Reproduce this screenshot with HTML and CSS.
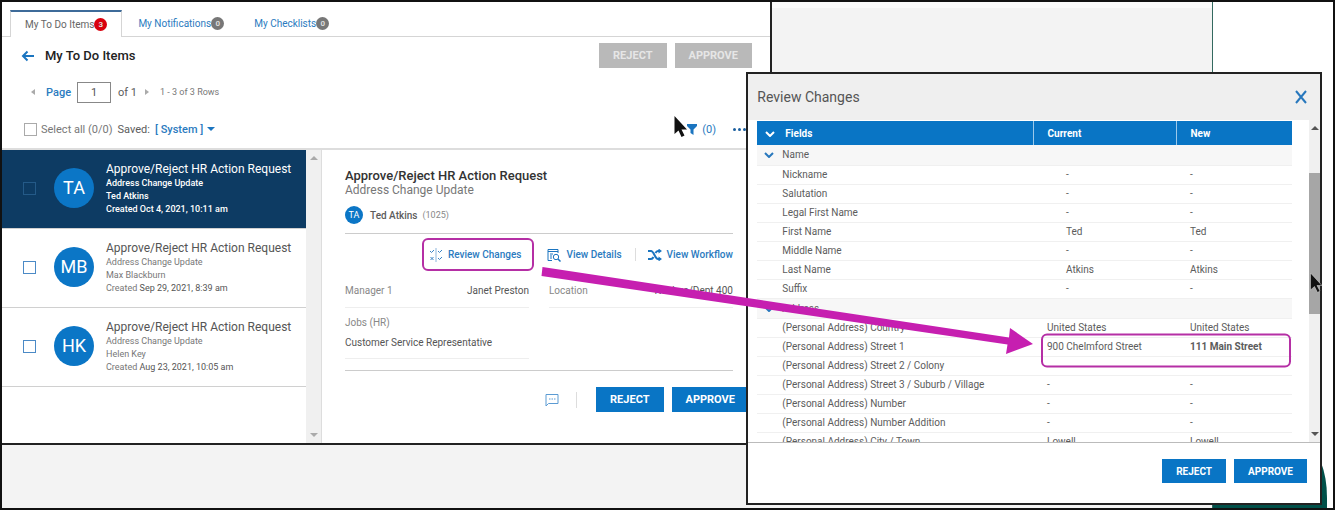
FILE: index.html
```html
<!DOCTYPE html>
<html lang="en">
<head>
  <meta charset="UTF-8">
  <meta name="viewport" content="width=device-width, initial-scale=1.0">
  <title>My To Do Items</title>
  <link rel="stylesheet" href="styles.css">
</head>
<body>
  <div class="slide">
    <div class="backdrop"></div>
    <div class="side"><div class="swoosh"></div></div>

    <!-- To do window -->
    <main class="window app">
      <nav class="tabs">
        <a href="#todo" class="tab active">My To Do Items<span class="count red">3</span></a>
        <a href="#notifications" class="tab">My Notifications<span class="count">0</span></a>
        <a href="#checklists" class="tab">My Checklists<span class="count">0</span></a>
      </nav>

      <header class="title-bar">
        <a href="#back" class="back" aria-label="Back">
          <svg width="14" height="12" viewBox="0 0 14 12"><path d="M13 6H2M6.500 1.500L2 6l4.500 4.500" fill="none" stroke="#1b75c0" stroke-width="2"/></svg>
        </a>
        <h1>My To Do Items</h1>
        <button class="btn disabled" disabled>REJECT</button>
        <button class="btn disabled" disabled>APPROVE</button>
      </header>

      <div class="pager">
        <span class="arrow left"></span>
        <label for="page">Page</label>
        <input type="text" id="page" value="1">
        <span class="total">of 1</span>
        <span class="arrow right"></span>
        <span class="rows">1 - 3 of 3 Rows</span>
      </div>

      <div class="toolbar">
        <input type="checkbox" id="all" class="check grey">
        <label for="all">Select all (0/0)</label>
        <span class="saved">Saved:</span>
        <button class="link saved-view">[ System ] <span class="caret"></span></button>
        <button class="link filter">
          <svg width="10" height="11" viewBox="0 0 10 11"><path d="M0 0h10v2L6.500 5.500V11L3.500 9V5.500L0 2z" fill="#1b75c0"/></svg>
          (0)
        </button>
        <button class="link more" aria-label="More"><i></i><i></i><i></i></button>
      </div>

      <div class="content">
        <div class="list">
          <article class="item selected">
            <input type="checkbox" class="check" aria-label="Select Ted Atkins">
            <div class="avatar">TA</div>
            <div class="text">
              <h2>Approve/Reject HR Action Request</h2>
              <p>Address Change Update</p>
              <p>Ted Atkins</p>
              <p>Created Oct 4, 2021, 10:11 am</p>
            </div>
          </article>
          <article class="item">
            <input type="checkbox" class="check" aria-label="Select Max Blackburn">
            <div class="avatar">MB</div>
            <div class="text">
              <h2>Approve/Reject HR Action Request</h2>
              <p>Address Change Update</p>
              <p>Max Blackburn</p>
              <p>Created <span>Sep 29, 2021, 8:39 am</span></p>
            </div>
          </article>
          <article class="item">
            <input type="checkbox" class="check" aria-label="Select Helen Key">
            <div class="avatar">HK</div>
            <div class="text">
              <h2>Approve/Reject HR Action Request</h2>
              <p>Address Change Update</p>
              <p>Helen Key</p>
              <p>Created <span>Aug 23, 2021, 10:05 am</span></p>
            </div>
          </article>
        </div>
        <div class="scrollbar"><span class="up"></span><span class="down"></span></div>

        <section class="detail">
          <h2>Approve/Reject HR Action Request</h2>
          <p class="sub">Address Change Update</p>
          <div class="person">
            <div class="avatar small">TA</div>
            <span>Ted Atkins</span>
            <small>(1025)</small>
          </div>
          <div class="links">
            <a href="#review" class="marked">
              <svg width="14" height="14" viewBox="0 0 14 14" fill="none" stroke="#3b83c4"><path d="M7 0v14" stroke="#8db6dc"/><path d="M1 3l1.500 1.500L5 2M9 3l1.500 1.500L13 2M9 10l1.500 1.500L13 9M1.500 9l3 3M4.500 9l-3 3"/></svg>
              Review Changes
            </a>
            <a href="#details">
              <svg width="14" height="14" viewBox="0 0 14 14" fill="none" stroke="#1b75c0"><path d="M5 12.500H1v-11h10V5M1 3.500h10M3 6h3M3 8h2M3 10h2"/><circle cx="9" cy="9" r="2.700"/><path d="M11 11l2.500 2.500" stroke-width="1.500"/></svg>
              View Details
            </a>
            <a href="#workflow" class="divided">
              <svg width="14" height="12" viewBox="0 0 14 12"><path d="M0 2h3c3 0 4 8 7 8h1M0 10h3c1 0 2-1 2.500-2M7.500 4C8 3 9 2 10 2h1" fill="none" stroke="#1b75c0" stroke-width="2"/><path d="M10.500-.5L14 2l-3.500 2.500zM10.500 7.500L14 10l-3.500 2.500z" fill="#1b75c0"/></svg>
              View Workflow
            </a>
          </div>
          <div class="facts">
            <div class="fact"><span>Manager 1</span><b>Janet Preston</b></div>
            <div class="fact"><span>Location</span><b>Nashua/Dept 400</b></div>
            <div class="fact stacked"><span>Jobs (HR)</span><b>Customer Service Representative</b></div>
          </div>
          <footer class="detail-actions">
            <button class="link comment" aria-label="Comments">
              <svg width="14" height="14" viewBox="0 0 14 14" fill="none" stroke="#5b9bd3"><path d="M1 13V1.500h12v9H3.500z"/><path d="M4 6h1.500M6.500 6H8M9 6h1.500"/></svg>
            </button>
            <button class="btn">REJECT</button>
            <button class="btn">APPROVE</button>
          </footer>
        </section>
      </div>
    </main>

    <!-- Review Changes dialog -->
    <section class="window dialog">
      <header class="dialog-head">
        <h2>Review Changes</h2>
        <button class="link" aria-label="Close">
          <svg width="12" height="14" viewBox="0 0 12 14"><path d="M1 1l10 12M11 1L1 13" fill="none" stroke="#2878bd" stroke-width="2"/></svg>
        </button>
      </header>
      <div class="dialog-body">
        <div class="table-wrap">
          <table>
            <thead>
              <tr>
                <th><svg width="10" height="6" viewBox="0 0 10 6"><path d="M1 1l4 4 4-4" fill="none" stroke="#fff" stroke-width="2"/></svg>Fields</th>
                <th>Current</th>
                <th>New</th>
              </tr>
            </thead>
            <tbody class="names">
              <tr class="group"><td colspan="3"><svg width="10" height="6" viewBox="0 0 10 6"><path d="M1 1l4 4 4-4" fill="none" stroke="#2878bd" stroke-width="2"/></svg>Name</td></tr>
              <tr><td>Nickname</td><td>-</td><td>-</td></tr>
              <tr><td>Salutation</td><td>-</td><td>-</td></tr>
              <tr><td>Legal First Name</td><td>-</td><td>-</td></tr>
              <tr><td>First Name</td><td>Ted</td><td>Ted</td></tr>
              <tr><td>Middle Name</td><td>-</td><td>-</td></tr>
              <tr><td>Last Name</td><td>Atkins</td><td>Atkins</td></tr>
              <tr><td>Suffix</td><td>-</td><td>-</td></tr>
            </tbody>
            <tbody>
              <tr class="group"><td colspan="3"><svg width="10" height="6" viewBox="0 0 10 6"><path d="M1 1l4 4 4-4" fill="none" stroke="#2878bd" stroke-width="2"/></svg>Address</td></tr>
              <tr><td>(Personal Address) Country</td><td>United States</td><td>United States</td></tr>
              <tr><td>(Personal Address) Street 1</td><td>900 Chelmford Street</td><td><strong>111 Main Street</strong></td></tr>
              <tr><td>(Personal Address) Street 2 / Colony</td><td></td><td></td></tr>
              <tr><td>(Personal Address) Street 3 / Suburb / Village</td><td>-</td><td>-</td></tr>
              <tr><td>(Personal Address) Number</td><td>-</td><td>-</td></tr>
              <tr><td>(Personal Address) Number Addition</td><td>-</td><td>-</td></tr>
              <tr><td>(Personal Address) City / Town</td><td>Lowell</td><td>Lowell</td></tr>
            </tbody>
          </table>
        </div>
        <div class="scrollbar dark"><span class="up"></span><span class="thumb"></span><span class="down"></span></div>
      </div>
      <footer class="dialog-foot">
        <button class="btn">REJECT</button>
        <button class="btn">APPROVE</button>
      </footer>
    </section>

    <!-- Callouts and mouse pointers -->
    <svg class="marks" width="1331" height="506" viewBox="2 2 1331 506">
      <path d="M542.500 267L1009 337.500 1010 328 1033 344 1006 354 1007.500 344.500 541.500 276z" fill="#c61fb0"/>
      <rect x="1042" y="334.500" width="248" height="32" rx="5" fill="none" stroke="#b52fa5" stroke-width="2"/>
      <path d="M674.500 116v18l4-3.500 3 6.500 3-1.500-3-6h5.500z" fill="#111"/>
      <path d="M1310.500 273v17l4-3.500 3 6 2.500-1.500-3-5.500h5z" fill="#111" stroke="#ddd" stroke-width=".5"/>
    </svg>
  </div>
</body>
</html>
```
FILE: styles.css
```css
* {
  box-sizing: border-box;
}

body {
  margin: 0;
  font-family: Roboto, "Liberation Sans", sans-serif;
  font-size: 11px;
  line-height: 13px;
  color: #5c5c5c;
  background: #fff;
}

h1, h2, p {
  margin: 0;
}

a {
  color: #2b7bc0;
  text-decoration: none;
}

button {
  font-family: inherit;
  cursor: pointer;
}

/* Slide */
.slide {
  position: relative;
  display: flex;
  min-height: 100vh;
  border: 2px solid #111;
  overflow: hidden;
}

.backdrop {
  flex: 1;
  background: #f3f3f3;
  border-top: 6px solid #fafafa;
}

.side {
  display: flex;
  align-items: flex-end;
  width: 121px;
  border-left: 1px solid #33695f;
}

.swoosh {
  width: 114px;
  height: 60px;
  background: #005049;
  border-radius: 0 20px 0 0 / 0 50px 0 0;
}

.window {
  position: absolute;
  border: 2px solid #222;
  background: #fff;
}

/* Buttons */
.btn {
  height: 25px;
  padding: 0 14px;
  border: none;
  background: #0975c5;
  color: #fff;
  font-size: 11px;
  font-weight: bold;
}

.btn.disabled {
  background: #b9b9b9;
  color: #e6e6e6;
}

.link {
  display: flex;
  align-items: center;
  padding: 0;
  border: none;
  background: none;
  color: #2b7bc0;
  font-size: 11px;
}

.check {
  appearance: none;
  flex: none;
  width: 13px;
  height: 13px;
  margin: 0;
  border: 1px solid #4b8ac6;
}

.check.grey {
  border-color: #aaa;
}

/* To do window */
.app {
  top: 0;
  left: 0;
  width: calc(58% - 2px);
  border-width: 0 2px 2px 0;
}

.tabs {
  display: flex;
  height: 35px;
  padding-top: 8px;
  padding-left: 8px;
  border-bottom: 1px solid #d5d5d5;
}

.tab {
  display: flex;
  align-items: center;
  height: 27px;
  padding: 0 14px 0 16px;
  font-size: 10px;
}

.tab.active {
  border: 1px solid #d5d5d5;
  border-top: 2px solid #3e6b99;
  border-bottom: none;
  background: #fff;
  color: #666;
  padding: 0 14px;
}

.count {
  width: 13px;
  height: 13px;
  border-radius: 50%;
  background: #777;
  color: #ddd;
  font-size: 8px;
  font-weight: bold;
  text-align: center;
}

.count.red {
  background: #d9000d;
}

.title-bar {
  display: flex;
  align-items: center;
  gap: 8px;
  height: 37px;
  padding-right: 18px;
  padding-left: 19px;
}

.title-bar h1 {
  flex: 1;
  padding-left: 2px;
  font-size: 13px;
  font-weight: 500;
  color: #222;
}

.back {
  display: flex;
}

.pager {
  display: flex;
  align-items: center;
  height: 36px;
  padding-left: 29px;
}

.pager label {
  margin-left: 11px;
  color: #2b7bc0;
  font-weight: 500;
}

.pager input {
  width: 34px;
  height: 21px;
  margin: 0 7px 0 6px;
  border: 1px solid #888;
  color: #555;
  font-family: inherit;
  font-size: 11px;
  text-align: center;
}

.arrow {
  border: 3px solid transparent;
}

.arrow.left {
  border-left: none;
  border-right: 4px solid #aaa;
}

.arrow.right {
  margin-left: 8px;
  border-right: none;
  border-left: 4px solid #aaa;
}

.rows {
  margin-left: 11px;
  color: #777;
  font-size: 9px;
}

.toolbar {
  display: flex;
  align-items: center;
  height: 40px;
  padding-left: 22px;
  border-bottom: 2px solid #ddd;
}

.toolbar label {
  margin-left: 4px;
  color: #777;
}

.saved {
  margin-left: 5px;
}

.saved-view {
  margin-left: 5px;
  font-weight: 500;
}

.caret {
  margin-left: 4px;
  border: 4px solid transparent;
  border-top: 4px solid #1b75c0;
  border-bottom: none;
}

.filter {
  gap: 5px;
  margin-left: auto;
}

.more {
  gap: 2px;
  margin-left: 17px;
  margin-right: 24px;
}

.more i {
  width: 3px;
  height: 3px;
  border-radius: 50%;
  background: #1b5f9f;
}

.content {
  display: flex;
  height: 293px;
}

.list {
  flex: none;
  width: 304px;
}

.item {
  display: flex;
  align-items: center;
  height: 79px;
  padding-left: 21px;
  padding-bottom: 2px;
  border-bottom: 1px solid #d0d0d0;
  color: #777;
}

.item .avatar {
  margin-left: 18px;
}

.avatar {
  flex: none;
  width: 40px;
  height: 40px;
  border-radius: 50%;
  background: #0b76c6;
  color: #fff;
  font-size: 18px;
  line-height: 40px;
  text-align: center;
}

.avatar.small {
  width: 18px;
  height: 18px;
  font-size: 9px;
  line-height: 18px;
}

.text {
  margin-left: 12px;
}

.text h2 {
  font-size: 12px;
  line-height: 16px;
  font-weight: normal;
  color: #555;
}

.text p {
  font-size: 9px;
}

.text span {
  color: #555;
}

.item.selected,
.item.selected h2 {
  background: #0d3b63;
  color: #fff;
}

.item.selected p {
  font-weight: 500;
}

.item.selected .check {
  border-color: #245a88;
}

.scrollbar {
  display: flex;
  flex: none;
  flex-direction: column;
  justify-content: space-between;
  align-items: center;
  width: 16px;
  padding: 6px 0;
  background: #f0f0f0;
  border-right: 1px solid #ddd;
}

.up {
  border: 4px solid transparent;
  border-top: none;
  border-bottom: 4px solid #aaa;
}

.down {
  border: 4px solid transparent;
  border-bottom: none;
  border-top: 4px solid #aaa;
}

/* Detail pane */
.detail {
  flex: 1;
  min-width: 0;
  padding: 18px 37px 0 23px;
}

.detail h2 {
  font-size: 13px;
  line-height: 15px;
  font-weight: 500;
  color: #333;
}

.sub {
  font-size: 12px;
  line-height: 14px;
  color: #777;
}

.person {
  display: flex;
  align-items: center;
  height: 37px;
  border-bottom: 1px solid #ccc;
}

.person span {
  margin-left: 7px;
  font-size: 10px;
  font-weight: 500;
}

.person small {
  margin-left: 5px;
  font-size: 9px;
  color: #888;
}

.links {
  display: flex;
  justify-content: flex-end;
  align-items: center;
  height: 39px;
  margin-top: 1px;
}

.links a {
  display: flex;
  align-items: center;
  gap: 5px;
  font-size: 10px;
  font-weight: 500;
}

.links .marked {
  height: 33px;
  margin-right: 13px;
  padding: 0 11px 0 5px;
  border: 2px solid #b52fa5;
  border-radius: 6px;
}

.links .divided {
  margin-left: 13px;
  padding-left: 12px;
  border-left: 1px solid #ddd;
}

.facts {
  display: grid;
  grid-template-columns: 1fr 1fr;
  column-gap: 20px;
  padding-bottom: 11px;
  border-bottom: 1px solid #ccc;
}

.fact {
  display: flex;
  justify-content: space-between;
  align-items: center;
  height: 34px;
  border-bottom: 1px solid #eee;
  font-size: 10px;
}

.fact span {
  color: #888;
}

.fact b {
  font-weight: normal;
  color: #555;
}

.fact.stacked {
  flex-direction: column;
  align-items: flex-start;
  justify-content: flex-start;
  gap: 7px;
  height: 51px;
  padding-top: 8px;
}

.detail-actions {
  display: flex;
  justify-content: flex-end;
  align-items: center;
  gap: 8px;
  margin-top: 16px;
  margin-right: -16px;
}

.comment {
  height: 16px;
  margin-right: 11px;
  padding-right: 17px;
  border-right: 1px solid #ddd;
}

/* Dialog */
.dialog {
  top: 70px;
  right: 11px;
  left: calc(56% - 1px);
}

.dialog-head {
  display: flex;
  justify-content: space-between;
  align-items: center;
  height: 46px;
  padding: 0 13px 0 9px;
  background: #efefef;
}

.dialog-head h2 {
  font-size: 14px;
  font-weight: normal;
  color: #555;
}

.dialog-body {
  display: flex;
  height: 323px;
  padding-left: 9px;
  border-bottom: 1px solid #bbb;
}

.table-wrap {
  flex: 1;
  margin-top: 1px;
  margin-right: 17px;
  overflow: hidden;
}

table {
  width: 100%;
  border-collapse: collapse;
  table-layout: fixed;
  font-size: 10px;
}

th {
  height: 24px;
  padding: 0 14px;
  border-left: 1px solid #9cc9ea;
  background: #0975c5;
  color: #fff;
  font-weight: bold;
  text-align: left;
}

th:first-child {
  padding-left: 8px;
  border-left: none;
}

th:nth-child(2) {
  width: 143px;
}

th:nth-child(3) {
  width: 116px;
}

th svg {
  margin-right: 10px;
}

td {
  height: 19px;
  padding: 0 14px;
  border-bottom: 1px solid #f0f0f0;
  white-space: nowrap;
}

td:first-child {
  padding-left: 25px;
}

.names td:nth-child(2) {
  padding-left: 33px;
}

.group td {
  height: 20px;
  background: #f7f7f7;
}

.group td:first-child {
  padding-left: 7px;
}

.group svg {
  margin-right: 8px;
}

.scrollbar.dark {
  width: 11px;
  border: none;
}

.dark .up {
  border-bottom-color: #555;
}

.dark .down {
  border-top-color: #555;
}

.thumb {
  width: 11px;
  height: 141px;
  margin-bottom: 76px;
  background: #a6a6a6;
}

.dialog-foot {
  display: flex;
  justify-content: flex-end;
  align-items: center;
  gap: 8px;
  height: 60px;
  padding: 0 13px 4px;
}

.dialog-foot .btn {
  height: 24px;
  font-size: 10px;
}

.marks {
  position: absolute;
  top: 0;
  left: 0;
  pointer-events: none;
}
```
